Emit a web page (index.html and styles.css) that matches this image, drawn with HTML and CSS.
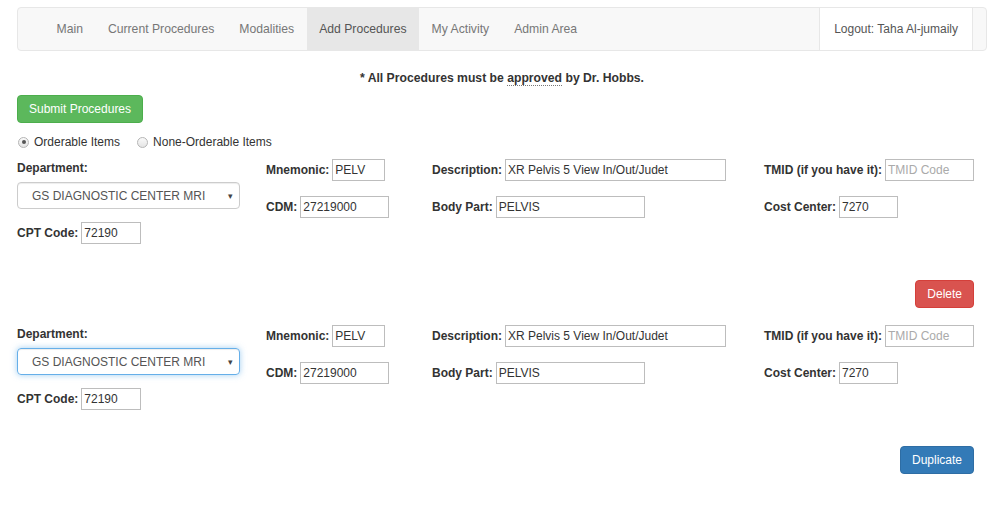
FILE: index.html
```html
<!DOCTYPE html>
<html>
<head>
<meta charset="utf-8">
<link rel="stylesheet" href="styles.css">
</head>
<body>
<div class="page">
  <nav class="navbar">
    <ul class="nav">
      <li><a>Main</a></li>
      <li><a>Current Procedures</a></li>
      <li><a>Modalities</a></li>
      <li class="active"><a>Add Procedures</a></li>
      <li><a>My Activity</a></li>
      <li><a>Admin Area</a></li>
    </ul>
    <div class="logout">Logout: Taha Al-jumaily</div>
  </nav>

  <p class="notice">* All Procedures must be <abbr>approved</abbr> by Dr. Hobbs.</p>

  <button class="btn btn-success">Submit Procedures</button>

  <div class="radios">
    <label class="radio"><span class="dot checked"></span>Orderable Items</label>
    <label class="radio"><span class="dot"></span>None-Orderable Items</label>
  </div>

  <div class="proc">
    <div class="col col1">
      <div class="lbl">Department:</div>
      <div class="select"><span>GS DIAGNOSTIC CENTER MRI</span><span class="caret">▾</span></div>
      <div class="field cpt"><span class="lbl">CPT Code:</span><span class="inp w60">72190</span></div>
    </div>
    <div class="col col2">
      <div class="field"><span class="lbl">Mnemonic:</span><span class="inp w53">PELV</span></div>
      <div class="field"><span class="lbl">CDM:</span><span class="inp w89">27219000</span></div>
    </div>
    <div class="col col3">
      <div class="field"><span class="lbl">Description:</span><span class="inp w221">XR Pelvis 5 View In/Out/Judet</span></div>
      <div class="field"><span class="lbl">Body Part:</span><span class="inp w149">PELVIS</span></div>
    </div>
    <div class="col col4">
      <div class="field"><span class="lbl">TMID (if you have it):</span><span class="inp w89 ph">TMID Code</span></div>
      <div class="field"><span class="lbl">Cost Center:</span><span class="inp w59">7270</span></div>
    </div>
  </div>

  <div class="actions first"><button class="btn btn-danger">Delete</button></div>

  <div class="proc second">
    <div class="col col1">
      <div class="lbl">Department:</div>
      <div class="select focus"><span>GS DIAGNOSTIC CENTER MRI</span><span class="caret">▾</span></div>
      <div class="field cpt"><span class="lbl">CPT Code:</span><span class="inp w60">72190</span></div>
    </div>
    <div class="col col2">
      <div class="field"><span class="lbl">Mnemonic:</span><span class="inp w53">PELV</span></div>
      <div class="field"><span class="lbl">CDM:</span><span class="inp w89">27219000</span></div>
    </div>
    <div class="col col3">
      <div class="field"><span class="lbl">Description:</span><span class="inp w221">XR Pelvis 5 View In/Out/Judet</span></div>
      <div class="field"><span class="lbl">Body Part:</span><span class="inp w149">PELVIS</span></div>
    </div>
    <div class="col col4">
      <div class="field"><span class="lbl">TMID (if you have it):</span><span class="inp w89 ph">TMID Code</span></div>
      <div class="field"><span class="lbl">Cost Center:</span><span class="inp w59">7270</span></div>
    </div>
  </div>

  <div class="actions"><button class="btn btn-primary">Duplicate</button></div>
</div>
</body>
</html>
```

FILE: styles.css
```css
* { box-sizing: border-box; }
html, body { margin: 0; padding: 0; background: #fff; }
body {
  font-family: "Liberation Sans", Arial, sans-serif;
  font-size: 12px;
  color: #333;
}
.page {
  width: 970px;
  margin-left: 17px;
  padding-top: 7px;
}
.navbar {
  display: flex;
  align-items: stretch;
  height: 44px;
  background: #f8f8f8;
  border: 1px solid #e7e7e7;
  border-radius: 4px;
  padding-right: 13px;
}
.nav {
  display: flex;
  list-style: none;
  margin: 0;
  padding: 0 0 0 26px;
  flex: 1;
  font-size: 12.2px;
}
.nav li a {
  display: flex;
  align-items: center;
  height: 42px;
  padding: 0 12.5px;
  color: #777;
}
.nav li.active a {
  background: #e7e7e7;
  color: #555;
}
.logout {
  display: flex;
  align-items: center;
  background: #fff;
  border-left: 1px solid #e7e7e7;
  border-right: 1px solid #e7e7e7;
  padding: 0 14px;
  color: #555;
  height: 42px;
  font-size: 12px;
}
.notice {
  text-align: center;
  font-weight: bold;
  margin: 19px 0 0 0;
  line-height: 16px;
  font-size: 12.2px;
}
abbr {
  text-decoration: none;
  border-bottom: 1px dotted #777;
}
.btn {
  font-family: "Liberation Sans", Arial, sans-serif;
  font-size: 12px;
  color: #fff;
  border: 1px solid transparent;
  border-radius: 4px;
  height: 28px;
  padding: 0 11px;
  line-height: 26px;
}
.btn-success {
  background: #5cb85c;
  border-color: #4cae4c;
  margin-top: 9px;
  display: block;
}
.btn-danger {
  background: #d9534f;
  border-color: #d43f3a;
}
.btn-primary {
  background: #337ab7;
  border-color: #2e6da4;
}
.radios {
  display: flex;
  margin-top: 12px;
  height: 14px;
  align-items: center;
  padding-left: 1px;
}
.radio {
  display: flex;
  align-items: center;
  color: #333;
  margin-right: 17px;
  font-size: 12px;
}
.dot {
  width: 11px;
  height: 11px;
  border-radius: 50%;
  border: 1px solid #b5b5b5;
  background: linear-gradient(#fafafa, #e4e4e4);
  margin-right: 5px;
  margin-left: 0;
  position: relative;
}
.dot.checked::after {
  content: "";
  position: absolute;
  left: 2.5px;
  top: 2.5px;
  width: 4px;
  height: 4px;
  border-radius: 50%;
  background: #555;
}
.proc {
  display: flex;
  margin-top: 10px;
}
.proc.second { margin-top: 17px; }
.col1 { width: 249px; padding-top: 2px; }
.col2 { width: 166px; }
.col3 { width: 332px; }
.col4 { width: 223px; }
.col .field + .field { margin-top: 15px; }
.lbl {
  font-weight: bold;
  color: #333;
  line-height: 14px;
}
.field {
  display: flex;
  align-items: center;
  height: 22px;
}
.field .lbl { margin-right: 3px; }
.inp {
  display: flex;
  align-items: center;
  height: 22px;
  border: 1px solid #bdbdbd;
  padding: 0 2px;
  color: #333;
  background: #fff;
}
.inp.ph { color: #aaa; }
.w53 { width: 53px; }
.w59 { width: 59px; }
.w60 { width: 60px; }
.w89 { width: 89px; }
.w149 { width: 149px; }
.w221 { width: 221px; }
.select {
  margin-top: 7px;
  width: 223px;
  height: 27px;
  border: 1px solid #ccc;
  border-radius: 4px;
  display: flex;
  align-items: center;
  justify-content: space-between;
  padding: 0 6px 0 14px;
  color: #555;
  font-size: 12px;
  box-shadow: inset 0 1px 1px rgba(0,0,0,.075);
}
.select.focus {
  border-color: #66afe9;
  box-shadow: inset 0 1px 1px rgba(0,0,0,.075), 0 0 6px rgba(102,175,233,.6);
}
.caret { font-size: 9px; color: #444; }
.cpt { margin-top: 13px; }
.actions {
  display: flex;
  justify-content: flex-end;
  padding-right: 13px;
  margin-top: 36px;
}
```
